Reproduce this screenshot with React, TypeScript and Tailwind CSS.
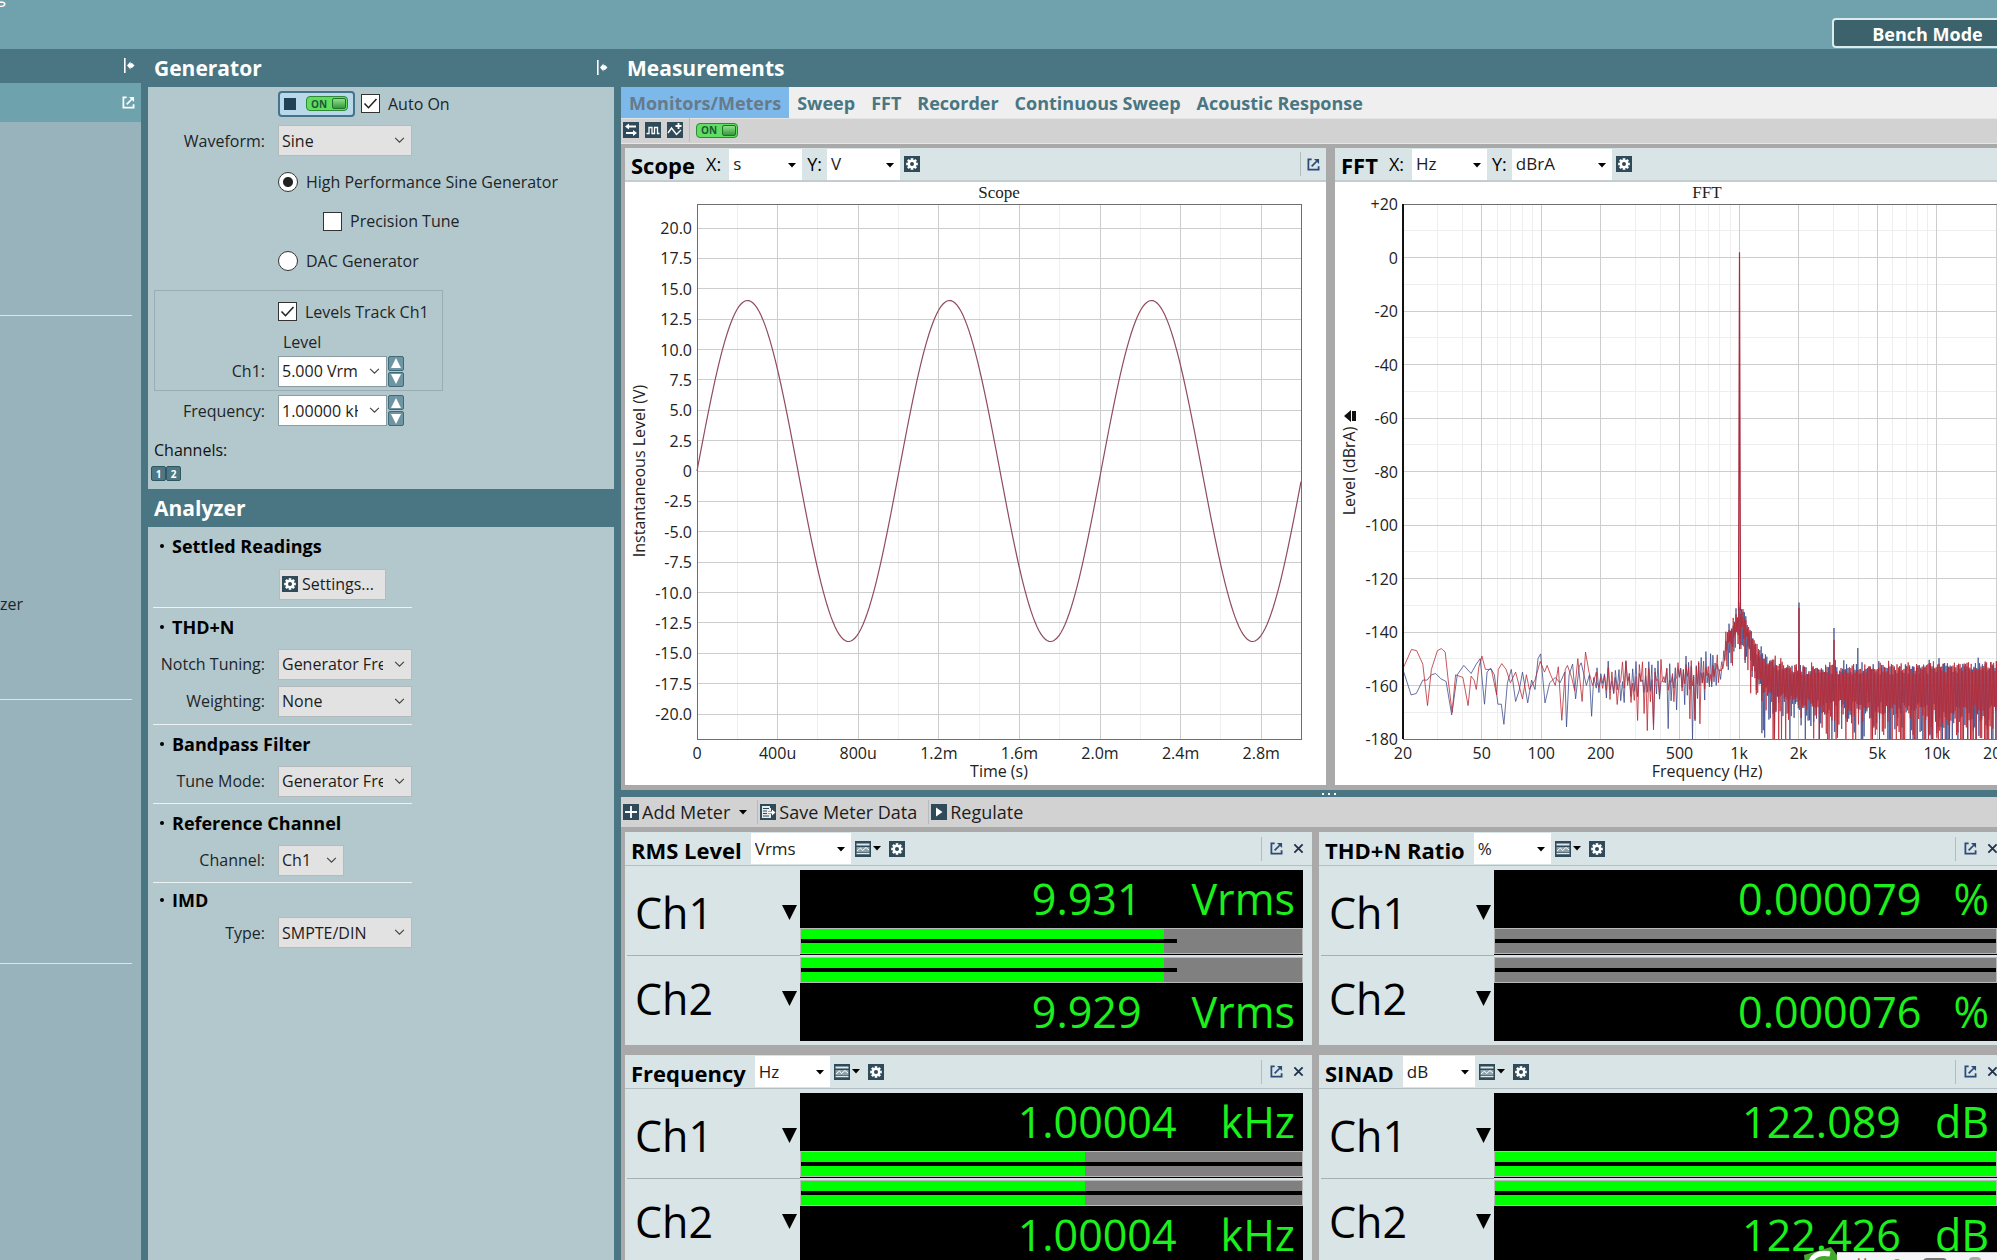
import { useId, type ReactNode } from "react";

/* ---------- icons ---------- */

function Tile({ children, className = "" }: { children: ReactNode; className?: string }) {
  return (
    <svg viewBox="0 0 16 16" className={`h-4 w-4 shrink-0 bg-[#2f4b5a] ${className}`} aria-hidden="true">
      {children}
    </svg>
  );
}

function Gear() {
  return (
    <Tile>
      <g fill="#fff">
        {[0, 45, 90, 135].map((a) => (
          <rect key={a} x="6.7" y="2.2" width="2.6" height="11.6" transform={`rotate(${a} 8 8)`} />
        ))}
        <circle cx="8" cy="8" r="4.3" />
      </g>
      <circle cx="8" cy="8" r="2" fill="#2f4b5a" />
    </Tile>
  );
}

function PopOut({ className = "text-[#2c4a78]" }: { className?: string }) {
  return (
    <svg viewBox="0 0 14 14" className={`h-[13px] w-[13px] shrink-0 ${className}`} fill="none" stroke="currentColor" strokeWidth="1.9" aria-hidden="true">
      <path d="M5 1.5H1.5v11h11V9" />
      <path d="M5 9l5.5-5.5" />
      <path d="M7.5 1h5.5v5.5z" fill="currentColor" stroke="none" />
    </svg>
  );
}

function Dock() {
  return (
    <svg viewBox="0 0 12 15" className="h-[15px] w-3 shrink-0" fill="#fff" aria-hidden="true">
      <path d="M1 0h1.600v15H1zM4 7.500l3.500-4v2L9 5l2.500 2.500L9 10l-1.500-.500v2z" />
    </svg>
  );
}

function Caret() {
  return (
    <svg viewBox="0 0 8 5" className="h-[5px] w-2 shrink-0" aria-hidden="true">
      <path d="M0 0h8L4 4.500z" fill="#000" />
    </svg>
  );
}

function Cross() {
  return (
    <svg viewBox="0 0 12 12" className="h-[11px] w-[11px] shrink-0" stroke="#20324d" strokeWidth="2" aria-hidden="true">
      <path d="M1.500 1.500l9 9M10.500 1.500l-9 9" />
    </svg>
  );
}

function ViewIcon() {
  return (
    <Tile>
      <path d="M1.500 2.500h13v2h-13z" fill="#dfe8ea" />
      <path d="M1.500 6h13v5h-13z" fill="#8fa3ab" />
      <path d="M2 10l3.500-3 2 2.500 3.500-3 3 2.500" fill="none" stroke="#fff" />
      <path d="M1.500 12.500h13" stroke="#dfe8ea" strokeWidth="1.500" />
    </Tile>
  );
}

function OnSwitch() {
  return (
    <span className="flex h-[15px] w-[42px] shrink-0 items-center justify-between rounded-sm border border-[#2d8a35] bg-[#63dc62] pl-1 pr-px">
      <span className="text-[10px] font-bold leading-none text-[#1c5a38]">ON</span>
      <span className="h-[11px] w-[14px] rounded-xs border border-[#23702c] bg-linear-to-b from-[#8fe08a] to-[#2f9a3c]" />
    </span>
  );
}

/* ---------- small controls ---------- */

function VSep() {
  return <span className="h-6 w-px shrink-0 border-l border-[#b4bcbf] bg-white" />;
}

function Combo({ value, width, white = false }: { value: string; width: string; white?: boolean }) {
  return (
    <span className={`relative block shrink-0 ${width}`}>
      <select
        aria-label={value}
        className={`block h-[31px] w-full appearance-none overflow-hidden border pl-[3px] pr-7 text-[16px] text-[#1c1c1c] ${
          white ? "border-[#8b9da3] bg-white" : "border-[#b5bbbd] bg-[#e2e2e2]"
        }`}
      >
        <option>{value}</option>
      </select>
      <svg viewBox="0 0 12 8" className="pointer-events-none absolute right-[7px] top-3 h-[7px] w-[11px]" fill="none" stroke="#444" strokeWidth="1.300" aria-hidden="true">
        <path d="M1 1l5 5 5-5" />
      </svg>
    </span>
  );
}

function UnitCombo({ label, value, width }: { label: string; value: string; width: string }) {
  return (
    <span className={`relative block shrink-0 ${width}`}>
      <select aria-label={label} className="block h-[31px] w-full appearance-none bg-white pl-1 pr-5 text-[17px] text-[#1c1c1c]">
        <option>{value}</option>
      </select>
      <span className="pointer-events-none absolute right-[6px] top-[14px]">
        <Caret />
      </span>
    </span>
  );
}

function Check({ label, checked = false }: { label: string; checked?: boolean }) {
  return (
    <label className="flex items-center gap-2 text-[16px] text-[#1d2528]">
      <span className="relative block h-[19px] w-[19px] shrink-0">
        <input type="checkbox" defaultChecked={checked} className="peer block h-full w-full appearance-none border border-[#333] bg-white" />
        <svg viewBox="0 0 19 19" className="pointer-events-none absolute inset-0 hidden peer-checked:block" fill="none" stroke="#222" strokeWidth="1.600" aria-hidden="true">
          <path d="M3.500 9.500l4 4.200L15.500 5" />
        </svg>
      </span>
      {label}
    </label>
  );
}

function Radio({ label, checked = false }: { label: string; checked?: boolean }) {
  return (
    <label className="flex items-center gap-2 text-[16px] text-[#1d2528]">
      <input
        type="radio"
        name="generator-type"
        defaultChecked={checked}
        className="block h-5 w-5 shrink-0 appearance-none rounded-full border border-[#333] bg-white checked:bg-[radial-gradient(circle,#222_0_4.500px,#fff_5.500px)]"
      />
      {label}
    </label>
  );
}

function Field({ label, children, height = "h-9" }: { label?: string; children: ReactNode; height?: string }) {
  return (
    <div className={`flex items-center gap-[13px] ${height}`}>
      <span className="w-[117px] shrink-0 whitespace-nowrap text-right text-[16px] text-[#1d2528]">{label}</span>
      {children}
    </div>
  );
}

function Spinner({ what }: { what: string }) {
  const cls = "flex h-[15px] w-4 items-center justify-center rounded-xs border border-[#3f6a77] bg-[#6d95a2]";
  return (
    <span className="flex flex-col gap-px">
      <button aria-label={`${what} up`} className={cls}>
        <svg viewBox="0 0 10 10" className="h-[10px] w-[10px]"><path d="M5 0l5 10H0z" fill="#fff" /></svg>
      </button>
      <button aria-label={`${what} down`} className={cls}>
        <svg viewBox="0 0 10 10" className="h-[10px] w-[10px]"><path d="M0 0h10L5 10z" fill="#fff" /></svg>
      </button>
    </span>
  );
}

/* ---------- side panels ---------- */

function PanelTitle({ children, dock = false }: { children: ReactNode; dock?: boolean }) {
  return (
    <div className="flex h-[38px] shrink-0 items-center justify-between pl-[6px] pr-[6px] pt-[2px]">
      <h2 className="text-[21px] font-bold text-white">{children}</h2>
      {dock && (
        <button aria-label="Collapse panel" className="mb-1">
          <Dock />
        </button>
      )}
    </div>
  );
}

function LeftColumn() {
  return (
    <aside className="flex w-[141px] shrink-0 flex-col">
      <div className="flex h-[34px] shrink-0 items-center justify-end pb-[2px] pr-[6px]">
        <button aria-label="Collapse navigator"><Dock /></button>
      </div>
      <div className="flex h-[39px] shrink-0 items-center justify-end bg-[#6ea2ac] pr-[6px]">
        <button aria-label="Undock navigator"><PopOut className="text-white" /></button>
      </div>
      <div className="flex flex-1 flex-col bg-[#98b3bb] pr-[9px]">
        <hr className="mt-[193px] border-[#dde6e8]" />
        <p className="mt-[276px] h-6 text-[16px] leading-6 text-[#1d2528] whitespace-nowrap">zer</p>
        <hr className="mt-[83px] border-[#dde6e8]" />
        <hr className="mt-[263px] border-[#dde6e8]" />
      </div>
    </aside>
  );
}

function Generator() {
  return (
    <section>
      <PanelTitle dock>Generator</PanelTitle>
      <div className="bg-[#b3c8cc] pb-2">
        <Field height="h-[33px]">
          <div className="flex items-center gap-[6px]">
            <button className="flex h-[26px] w-[77px] items-center justify-between rounded-sm border-2 border-[#44748c] bg-[#b9d8ea] pl-1 pr-[5px]">
              <span className="h-3 w-3 bg-[#1f4258]" />
              <OnSwitch />
            </button>
            <Check label="Auto On" checked />
          </div>
        </Field>
        <Field label="Waveform:" height="h-[41px]">
          <Combo value="Sine" width="w-[134px]" />
        </Field>
        <Field height="h-[42px]">
          <Radio label="High Performance Sine Generator" checked />
        </Field>
        <Field height="h-9">
          <div className="pl-[45px]"><Check label="Precision Tune" /></div>
        </Field>
        <Field height="h-11">
          <Radio label="DAC Generator" />
        </Field>
        <div className="ml-[6px] mr-[171px] mt-[7px] border border-[#9aadb4]">
          <div className="-ml-[7px]">
            <Field height="h-[41px]"><Check label="Levels Track Ch1" checked /></Field>
            <Field height="h-5"><span className="pl-[5px] text-[16px] text-[#1d2528]">Level</span></Field>
            <Field label="Ch1:" height="h-[38px]">
              <div className="flex items-center gap-px">
                <Combo value="5.000 Vrms" width="w-[109px]" white />
                <Spinner what="Level" />
              </div>
            </Field>
          </div>
        </div>
        <Field label="Frequency:" height="h-[39px]">
          <div className="flex items-center gap-px">
            <Combo value="1.00000 kHz" width="w-[109px]" white />
            <Spinner what="Frequency" />
          </div>
        </Field>
        <p className="h-9 pl-[6px] pt-2 text-[16px] leading-6 text-[#111]">Channels:</p>
        <div className="flex pl-[3px]">
          {["1", "2"].map((n) => (
            <button key={n} className="h-[15px] w-[15px] rounded-xs border border-[#2f5763] bg-[#4c7783] text-[10px] font-bold leading-none text-white">
              {n}
            </button>
          ))}
        </div>
      </div>
    </section>
  );
}

function Heading({ children, height = "h-[38px]" }: { children: ReactNode; height?: string }) {
  return (
    <h3 className={`flex items-center gap-2 pl-3 text-[18px] font-bold text-black ${height}`}>
      <span className="h-1 w-1 rounded-full bg-black" />
      {children}
    </h3>
  );
}

function Rule() {
  return <hr className="ml-[5px] mr-[202px] mt-1 border-[#edf2f3]" />;
}

function Analyzer() {
  return (
    <section className="flex flex-1 flex-col">
      <PanelTitle>Analyzer</PanelTitle>
      <div className="flex-1 bg-[#b3c8cc]">
        <Heading>Settled Readings</Heading>
        <Field height="h-[38px]">
          <button className="ml-px flex h-[31px] w-[107px] items-center gap-1 border border-[#b5bbbd] bg-[#e2e2e2] pl-[2px] text-[16px] text-[#1c1c1c]">
            <Gear />
            Settings...
          </button>
        </Field>
        <Rule />
        <Heading>THD+N</Heading>
        <Field label="Notch Tuning:"><Combo value="Generator Frequency" width="w-[134px]" /></Field>
        <Field label="Weighting:" height="h-[38px]"><Combo value="None" width="w-[134px]" /></Field>
        <Rule />
        <Heading>Bandpass Filter</Heading>
        <Field label="Tune Mode:"><Combo value="Generator Frequency" width="w-[134px]" /></Field>
        <Rule />
        <Heading>Reference Channel</Heading>
        <Field label="Channel:"><Combo value="Ch1" width="w-[66px]" /></Field>
        <Rule />
        <Heading height="h-[34px]">IMD</Heading>
        <Field label="Type:" height="h-[31px]"><Combo value="SMPTE/DIN" width="w-[134px]" /></Field>
      </div>
    </section>
  );
}

/* ---------- charts ---------- */

const TOP = 22;
const BOTTOM = 557;

function ScopeChart() {
  const left = 72;
  const right = 676;
  const zero = 289;
  const perVolt = 12.15;
  const volts = Array.from({ length: 17 }, (_, i) => 20 - i * 2.5);
  const times = ["0", "400u", "800u", "1.2m", "1.6m", "2.0m", "2.4m", "2.8m"];
  let d = "";
  for (let x = 0; x <= 604; x += 2) {
    const y = zero - 170.5 * Math.sin((2 * Math.PI * x) / 202);
    d += `${x === 0 ? "M" : "L"}${left + x} ${y.toFixed(1)}`;
  }
  return (
    <svg viewBox="0 0 701 603" className="block w-full bg-white text-[16px]" fill="#222" role="img" aria-label="Scope chart">
      <text x="374" y="16" textAnchor="middle" className="font-['Liberation_Serif',serif] text-[17px]">Scope</text>
      <g shapeRendering="crispEdges">
        {times.map((t, i) => (
          <g key={t}>
            <path d={`M${left + i * 80.6} ${TOP}V${BOTTOM}`} stroke="#cdcdcd" />
            <path d={`M${left + 40.3 + i * 80.6} ${TOP}V${BOTTOM}`} stroke="#efefef" />
          </g>
        ))}
        {volts.map((v) => (
          <path key={v} d={`M${left} ${zero - v * perVolt}H${right}`} stroke="#cdcdcd" />
        ))}
        <rect x={left} y={TOP} width={right - left} height={BOTTOM - TOP} fill="none" stroke="#6e6e6e" />
      </g>
      {volts.map((v) => (
        <text key={v} x="67" y={zero - v * perVolt + 6} textAnchor="end">{v === 0 ? "0" : v.toFixed(1)}</text>
      ))}
      {times.map((t, i) => (
        <text key={t} x={left + i * 80.6} y="577" textAnchor="middle">{t}</text>
      ))}
      <text x="374" y="595" textAnchor="middle">Time (s)</text>
      <text transform="translate(20 289) rotate(-90)" textAnchor="middle">Instantaneous Level (V)</text>
      <path d={d} fill="none" stroke="#8f4c5c" strokeWidth="1.200" />
    </svg>
  );
}

/* Low-frequency part of each trace as [log position, level] pairs. */
const RED_LOW: number[][] = [
  [194, -153], [212, -146.500], [224, -147], [238, -152], [249, -167.500], [258, -154], [272, -147], [281, -146.200], [290, -147.500], [297, -158], [306, -170], [314, -156],
  [331, -157], [343, -167.500], [350, -156.500], [357, -158], [362, -161.500], [368, -153], [375, -149], [383, -154], [397, -154], [409, -163.500], [413, -154], [421, -151.800],
  [431, -154], [441, -159], [453, -155], [469, -165], [478, -156], [485, -161.500], [498, -158], [510, -151], [520, -155], [526, -152.500], [534, -156], [545, -160],
  [552, -153], [560, -173], [568, -154], [573, -152.500], [583, -157], [590, -162], [597, -150], [607, -166], [615, -147.500], [623, -155], [631, -160], [640, -155],
];
const BLUE_LOW: number[][] = [
  [194, -155], [211, -163.500], [223, -163], [238, -158], [248, -158], [258, -156], [268, -155.500], [280, -157.500], [292, -158.500], [305, -171], [318, -156], [333, -152.500],
  [350, -155.500], [362, -152], [371, -150], [381, -167], [387, -155], [395, -153.500], [404, -156], [412, -167], [420, -167], [426, -174.500], [434, -159], [443, -154],
  [453, -166], [461, -162], [469, -155], [481, -166.500], [490, -158], [498, -161.500], [505, -150], [511, -148.200], [521, -166.500], [532, -159], [545, -157], [556, -159],
  [567, -155], [571, -175.500], [577, -156], [585, -152], [592, -165], [600, -153], [605, -151.500], [617, -160], [624, -156], [629, -171.500], [634, -157], [640, -161],
];

const ENVELOPE: number[][] = [
  [261, -151], [330, -150], [375, -147], [388, -146], [392, -137], [400, -134], [404, -130], [408, -131], [414, -137], [422, -145], [436, -150], [460, -152], [560, -152], [690, -150.500],
];

function envelope(x: number) {
  for (let i = 1; i < ENVELOPE.length; i++) {
    const [x0, y0] = ENVELOPE[i - 1];
    const [x1, y1] = ENVELOPE[i];
    if (x <= x1) return y0 + ((y1 - y0) * (x - x0)) / (x1 - x0);
  }
  return -151;
}

function levelY(db: number) {
  return TOP + (20 - db) * 2.675;
}

function buildTrace(low: number[][], seed: number, harmonics: number[][]) {
  let s = seed;
  const rnd = () => {
    s = (s * 1664525 + 1013904223) % 4294967296;
    return s / 4294967296;
  };
  let d = low.map(([p, db], i) => `${i ? "L" : "M"}${(p / 2.316 - 15).toFixed(1)} ${levelY(db).toFixed(1)}`).join("");
  let x = 262;
  let high = true;
  while (x < 676) {
    const top = envelope(x);
    const nearTone = x > 391 && x < 417;
    const below = x <= 391;
    const t = Math.max(0, (x - 417) / 260);
    let db: number;
    if (high) {
      db = top - rnd() * (below ? 9 : 4) + (rnd() > 0.93 ? 2 : 0);
    } else {
      const spread = nearTone ? 6 : below ? 6 : 5 + t * 6;
      const floor = nearTone ? 7 : below ? 7 : 11 + t * 6;
      db = top - floor - Math.min(40, -Math.log(1 - rnd()) * spread);
    }
    for (const [hx, level] of harmonics) if (high && Math.abs(x - hx) < 0.6) db = level;
    d += `L${x.toFixed(1)} ${Math.min(BOTTOM, levelY(db)).toFixed(1)}`;
    high = !high;
    x += below ? 1.900 - (x - 262) / 150 : 0.700;
  }
  return d;
}

const BLUE_TRACE = buildTrace(BLUE_LOW, 77, [[464, -129], [499, -138.500], [523, -146]]);
const RED_TRACE = buildTrace(RED_LOW, 4242, [[464, -131], [499, -143]]);

function FftChart() {
  const clip = useId();
  const left = 68;
  const right = 676;
  const fx = (f: number) => left + 197.8 * Math.log10(f / 20);
  const majors: [number, string][] = [[20, "20"], [50, "50"], [100, "100"], [200, "200"], [500, "500"], [1000, "1k"], [2000, "2k"], [5000, "5k"], [10000, "10k"], [20000, "20k"]];
  const minors = [30, 40, 60, 70, 80, 90, 300, 400, 600, 700, 800, 900, 3000, 4000, 6000, 7000, 8000, 9000];
  const levels = Array.from({ length: 11 }, (_, i) => 20 - i * 20);
  return (
    <svg viewBox="0 0 701 603" className="block w-full bg-white text-[16px]" fill="#222" role="img" aria-label="FFT chart">
      <clipPath id={clip}><rect x={left} y={TOP} width={right - left} height={BOTTOM - TOP} /></clipPath>
      <text x="372" y="16" textAnchor="middle" className="font-['Liberation_Serif',serif] text-[17px]">FFT</text>
      <g shapeRendering="crispEdges">
        {minors.map((f) => <path key={f} d={`M${fx(f)} ${TOP}V${BOTTOM}`} stroke="#eeeeee" />)}
        {levels.slice(1).map((l) => <path key={l} d={`M${left} ${levelY(l + 10)}H${right}`} stroke="#eeeeee" />)}
        {majors.map(([f]) => <path key={f} d={`M${fx(f)} ${TOP}V${BOTTOM}`} stroke="#cdcdcd" />)}
        {levels.map((l) => <path key={l} d={`M${left} ${levelY(l)}H${right}`} stroke="#cdcdcd" />)}
      </g>
      <g clipPath={`url(#${clip})`} fill="none" strokeLinejoin="bevel">
        <path d={BLUE_TRACE} stroke="#3d4c8c" strokeWidth="0.800" />
        <path d={RED_TRACE} stroke="#bc2a34" strokeWidth="0.800" />
        <path d={`M403.500 ${levelY(-132)}L404.500 ${levelY(2)}L405.500 ${levelY(-132)}`} stroke="#a8283c" strokeWidth="1.200" />
      </g>
      <g shapeRendering="crispEdges" fill="none">
        <path d={`M${left} ${TOP}H${right}V${BOTTOM}H${left}`} stroke="#6e6e6e" />
        <path d={`M${left} ${TOP}V${BOTTOM}`} stroke="#111" strokeWidth="2" />
      </g>
      {levels.map((l) => (
        <text key={l} x="63" y={levelY(l) + 6} textAnchor="end">{l > 0 ? `+${l}` : l}</text>
      ))}
      {majors.map(([f, t]) => (
        <text key={f} x={fx(f)} y="577" textAnchor="middle">{t}</text>
      ))}
      <text x="372" y="595" textAnchor="middle">Frequency (Hz)</text>
      <text transform="translate(20 289) rotate(-90)" textAnchor="middle">Level (dBrA)</text>
      <path d="M9 234l7-6v12zM17 229h4v10h-4z" fill="#111" />
    </svg>
  );
}

function GraphPanel({ title, x, y, xWidth, yWidth, children }: { title: string; x: string; y: string; xWidth: string; yWidth: string; children: ReactNode }) {
  return (
    <section className="min-w-0 flex-1 bg-white">
      <header className="flex h-[34px] items-center border-b-2 border-[#c3cccf] bg-[#d9e4e6] pl-[6px]">
        <h3 className="mr-[11px] pt-[2px] text-[22px] font-bold leading-none text-black">{title}</h3>
        <span className="mr-2 text-[18px]">X:</span>
        <UnitCombo label={`${title} X unit`} value={x} width={xWidth} />
        <span className="mx-[5px] text-[18px]">Y:</span>
        <UnitCombo label={`${title} Y unit`} value={y} width={yWidth} />
        <button aria-label={`${title} settings`} className="ml-1"><Gear /></button>
        <span className="ml-auto flex items-center gap-[6px] pr-[6px]">
          <VSep />
          <button aria-label={`Undock ${title}`}><PopOut /></button>
        </span>
      </header>
      {children}
    </section>
  );
}

/* ---------- meters ---------- */

type MeterData = {
  title: string;
  unit: string;
  comboWidth: string;
  gap: string;
  readings: [string, string];
  suffix: string;
  level: number;
  line: number;
};

const METERS: MeterData[] = [
  { title: "RMS Level", unit: "Vrms", comboWidth: "w-[100px]", gap: "gap-[50px]", readings: ["9.931", "9.929"], suffix: "Vrms", level: 72.4, line: 75 },
  { title: "THD+N Ratio", unit: "%", comboWidth: "w-[77px]", gap: "gap-8", readings: ["0.000079", "0.000076"], suffix: "%", level: 0, line: 100 },
  { title: "Frequency", unit: "Hz", comboWidth: "w-[75px]", gap: "gap-11", readings: ["1.00004", "1.00004"], suffix: "kHz", level: 56.6, line: 100 },
  { title: "SINAD", unit: "dB", comboWidth: "w-[72px]", gap: "gap-[34px]", readings: ["122.089", "122.426"], suffix: "dB", level: 100, line: 100 },
];

function Bar({ label, level, line }: { label: string; level: number; line: number }) {
  return (
    <div role="meter" aria-label={label} aria-valuenow={level} className="relative h-[26px] border border-[#b9b9b9] bg-[#808080]">
      <div className="h-full bg-[#00ff00]" style={{ width: `${level}%` }} />
      <div className="absolute left-0 top-[10px] h-1 bg-black" style={{ width: `${line}%` }} />
    </div>
  );
}

function Digits({ value, suffix, gap }: { value: string; suffix: string; gap: string }) {
  return (
    <div className={`flex h-[58px] items-center justify-end bg-black pb-[2px] pr-2 text-[43px] leading-none text-[#1cf01c] ${gap}`}>
      <span>{value}</span>
      <span>{suffix}</span>
    </div>
  );
}

function ChannelName({ name }: { name: string }) {
  return (
    <div className="flex flex-1 items-center justify-between pb-px pl-2 pr-[3px] text-[43px] leading-none text-black">
      {name}
      <button aria-label={`${name} options`}>
        <svg viewBox="0 0 15 15" className="h-[15px] w-[15px]"><path d="M0 0h15L7.500 15z" fill="#000" /></svg>
      </button>
    </div>
  );
}

function Meter({ m }: { m: MeterData }) {
  return (
    <section className="bg-[#d9e4e6]">
      <header className="flex h-[34px] items-center border-b border-[#b3bfc2] pl-[6px]">
        <h3 className="mr-[9px] pt-[2px] text-[22px] font-bold leading-none text-black">{m.title}</h3>
        <UnitCombo label={`${m.title} unit`} value={m.unit} width={m.comboWidth} />
        <button aria-label={`${m.title} view`} className="ml-1 flex items-center gap-[2px]"><ViewIcon /><Caret /></button>
        <button aria-label={`${m.title} settings`} className="ml-2"><Gear /></button>
        <span className="ml-auto flex items-center gap-2 pr-2">
          <VSep />
          <button aria-label={`Undock ${m.title}`}><PopOut /></button>
          <button aria-label={`Close ${m.title}`} className="ml-[2px]"><Cross /></button>
        </span>
      </header>
      <div className="flex pb-1 pr-[9px] pt-1">
        <div className="flex w-[175px] shrink-0 flex-col pl-[2px]">
          <ChannelName name="Ch1" />
          <div className="h-px bg-[#a5b1b4]" />
          <ChannelName name="Ch2" />
        </div>
        <div className="flex min-w-0 flex-1 flex-col">
          <Digits value={m.readings[0]} suffix={m.suffix} gap={m.gap} />
          <Bar label={`${m.title} Ch1`} level={m.level} line={m.line} />
          <div className="mb-[2px] h-px bg-black" />
          <Bar label={`${m.title} Ch2`} level={m.level} line={m.line} />
          <Digits value={m.readings[1]} suffix={m.suffix} gap={m.gap} />
        </div>
      </div>
    </section>
  );
}

/* ---------- measurements ---------- */

const TABS = ["Monitors/Meters", "Sweep", "FFT", "Recorder", "Continuous Sweep", "Acoustic Response"];

function Measurements() {
  return (
    <main className="-mr-[39px] flex min-w-0 flex-1 flex-col">
      <PanelTitle>Measurements</PanelTitle>
      <nav className="flex h-8 shrink-0 border-b border-[#e4e4e4] bg-[#efefef]">
        {TABS.map((t, i) => (
          <button key={t} className={`px-2 pt-px text-[18px] font-bold ${i === 0 ? "bg-[#7db8ea] text-[#667a8a]" : "text-[#497682]"}`}>
            {t}
          </button>
        ))}
      </nav>
      <div className="flex h-[25px] shrink-0 items-center gap-[6px] border-b border-[#e6e6e6] bg-[#d2d2d2] pb-[2px] pl-[2px]">
        <button aria-label="Switch inputs">
          <Tile>
            <path d="M2 4.500L6 1.500v2h7v2H6v2zM14 11l-4-3v2H3v2h7v2z" fill="#fff" />
          </Tile>
        </button>
        <button aria-label="Signal monitor">
          <Tile><path d="M1.500 11.500H4v-6h3v6h2.500v-6h3v6h2" fill="none" stroke="#fff" strokeWidth="1.300" /></Tile>
        </button>
        <button aria-label="Add trace">
          <Tile>
            <path d="M1 11l3.500-5 5 6.500L14 8" fill="none" stroke="#fff" strokeWidth="1.400" />
            <path d="M11.500 1v6M8.500 4h6" stroke="#fff" strokeWidth="1.800" />
          </Tile>
        </button>
        <VSep />
        <button aria-label="Monitors on"><OnSwitch /></button>
      </div>
      <div className="flex gap-[9px] bg-[#a9a9a9] pb-[5px] pl-1 pt-1">
        <GraphPanel title="Scope" x="s" y="V" xWidth="w-[73px]" yWidth="w-[73px]"><ScopeChart /></GraphPanel>
        <GraphPanel title="FFT" x="Hz" y="dBrA" xWidth="w-[75px]" yWidth="w-[100px]"><FftChart /></GraphPanel>
      </div>
      <div className="flex h-[7px] shrink-0 items-center justify-center gap-1">
        <span className="h-[2px] w-[2px] bg-white" />
        <span className="h-[2px] w-[2px] bg-white" />
        <span className="h-[2px] w-[2px] bg-white" />
      </div>
      <div className="flex h-[30px] shrink-0 items-center bg-[#d2d2d2] pl-[2px] text-[18px] text-[#1c1c1c]">
        <button className="mr-[10px] flex items-center gap-[3px]">
          <Tile><path d="M8 2v12M2 8h12" stroke="#fff" strokeWidth="1.800" /></Tile>
          Add Meter
          <span className="ml-[6px]"><Caret /></span>
        </button>
        <VSep />
        <button className="ml-[2px] mr-[11px] flex items-center gap-[3px]">
          <Tile>
            <path d="M2 2h8v2h1v3H8v3h3v4H2z" fill="#e8eef0" />
            <path d="M3 4.500h6M3 7h4M3 9.500h4M3 12h6" stroke="#2f4b5a" />
            <path d="M8 7.500h4v-2l3.500 3-3.500 3v-2H8z" fill="#fff" />
          </Tile>
          Save Meter Data
        </button>
        <VSep />
        <button className="ml-[2px] flex items-center gap-[3px]">
          <Tile><path d="M5 3.500l6.500 4.500L5 12.500z" fill="#fff" /></Tile>
          Regulate
        </button>
      </div>
      <div className="grid flex-1 grid-cols-2 content-start gap-x-[7px] gap-y-[10px] bg-[#a9a9a9] pl-1 pr-[30px] pt-[5px]">
        {METERS.map((m) => <Meter key={m.title} m={m} />)}
      </div>
    </main>
  );
}

function InputMethodBar() {
  return (
    <div className="absolute right-0 top-full -mt-[13px] flex h-9 w-[194px] items-start overflow-hidden">
      <svg viewBox="0 0 34 36" className="h-9 w-[34px] shrink-0" aria-hidden="true">
        <path d="M1 8L28 0l6 8v28H4z" fill="#45a82e" />
        <path d="M27 7C17 5 11 8 8 14" fill="none" stroke="#fff" strokeWidth="5" />
      </svg>
      <div className="mt-[5px] flex h-8 flex-1 items-start justify-between border-t border-[#cfcfd6] bg-[#f6f6f8] px-4 pt-1 text-[18px] leading-none text-[#555]">
        <span className="font-['Noto_Sans_CJK_SC',sans-serif]">英</span>
        <span className="mt-[2px] h-2 w-2 rounded-full bg-[#8a8a92]" />
        <span className="mt-px h-4 w-6 rounded-sm border-2 border-[#777]" />
        <span className="h-4 w-3 rounded-sm bg-[#aaa]" />
      </div>
    </div>
  );
}

export default function App() {
  return (
    <div className="relative flex h-screen flex-col overflow-hidden bg-[#497682] font-['Open_Sans','Noto_Sans',sans-serif]">
      <header className="flex h-[49px] shrink-0 items-start justify-between overflow-hidden bg-[#6fa2ad]">
        <span className="-ml-1 -mt-4 text-[18px] leading-6 text-white">g</span>
        <button className="-mr-[26px] mt-[18px] h-[30px] w-[191px] rounded-sm border-2 border-[#d9ecee] bg-[#3c626b] pt-px text-[18px] font-bold leading-none text-white">
          Bench Mode
        </button>
      </header>
      <div className="flex min-h-0 flex-1 gap-[7px]">
        <LeftColumn />
        <div className="flex w-[466px] shrink-0 flex-col">
          <Generator />
          <Analyzer />
        </div>
        <Measurements />
      </div>
      <InputMethodBar />
    </div>
  );
}
